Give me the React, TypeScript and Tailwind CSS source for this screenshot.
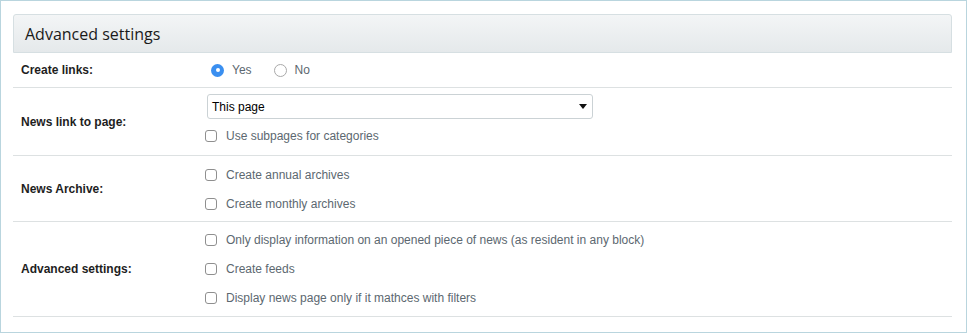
import React from 'react';

const Radio = ({ checked, label }: { checked?: boolean; label: string }) => (
  <label className="flex items-center gap-[8px]">
    {checked ? (
      <span className="flex h-[13px] w-[13px] items-center justify-center rounded-full bg-[#3a8ff0]">
        <span className="h-[4px] w-[4px] rounded-full bg-white" />
      </span>
    ) : (
      <span className="h-[13px] w-[13px] rounded-full border border-[#a9a9a9] bg-white" />
    )}
    <span>{label}</span>
  </label>
);

const Checkbox = ({ label }: { label: string }) => (
  <div className="flex h-[29px] items-center gap-[9px]">
    <span className="h-[12px] w-[12px] rounded-[3px] border border-[#8f8f8f] bg-white" />
    <span>{label}</span>
  </div>
);

const Row = ({ label, children, className = '' }: { label: string; children: React.ReactNode; className?: string }) => (
  <div className={`flex border-b border-[#dde1e2] ${className}`}>
    <div className="flex w-[192px] shrink-0 items-center pl-2 text-[12px] font-bold text-[#1e1e1e]">{label}</div>
    <div className="flex flex-col text-[12px] text-[#5c6870]">{children}</div>
  </div>
);

export default function App() {
  return (
    <div className="h-[333px] w-[967px] border border-[#b9d5de] bg-white pl-3 pr-[14px] pt-[13px] font-['Liberation_Sans',Arial,sans-serif]">
      <div className="flex h-[39px] items-center rounded-t-[3px] border border-[#d6dfe2] bg-gradient-to-b from-[#f3f5f6] to-[#e5e9eb] px-[11px] font-['Open_Sans',sans-serif] text-[16px] text-[#1a1a1a]">
        Advanced settings
      </div>

      <Row label="Create links:" className="h-[35px]">
        <div className="ml-[6px] flex h-full items-center gap-[22px]">
          <Radio checked label="Yes" />
          <Radio label="No" />
        </div>
      </Row>

      <Row label="News link to page:" className="pt-[6px] pb-[5px]">
        <div className="ml-[2px] mb-[2px] flex h-[25px] w-[386px] items-center justify-between rounded-[3px] border border-[#cbd2d5] bg-white pl-[4px] pr-[5px] text-[12px] text-black">
          <span>This page</span>
          <svg width="8" height="5" viewBox="0 0 8 5">
            <path d="M0 0h8L4 5z" fill="#111" />
          </svg>
        </div>
        <Checkbox label="Use subpages for categories" />
      </Row>

      <Row label="News Archive:" className="pt-[4px] pb-[3px]">
        <Checkbox label="Create annual archives" />
        <Checkbox label="Create monthly archives" />
      </Row>

      <Row label="Advanced settings:" className="pt-[3px] pb-[4px]">
        <Checkbox label="Only display information on an opened piece of news (as resident in any block)" />
        <Checkbox label="Create feeds" />
        <Checkbox label="Display news page only if it mathces with filters" />
      </Row>
    </div>
  );
}
